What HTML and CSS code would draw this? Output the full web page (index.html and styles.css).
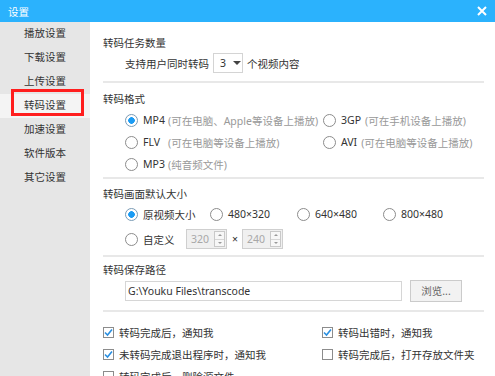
FILE: index.html
```html
<!DOCTYPE html>
<html lang="zh-CN">
<head>
  <meta charset="UTF-8" />
  <meta name="viewport" content="width=device-width, initial-scale=1.0" />
  <title>设置</title>
  <link rel="stylesheet" href="styles.css">
</head>
<body>
  <div class="window">
    <div class="titlebar">
      <span class="title">设置</span>
      <svg class="close" width="10" height="10" viewBox="0 0 10 10">
        <path d="M1 1 L9 9 M9 1 L1 9" stroke="#fff" stroke-width="2" fill="none" />
      </svg>
    </div>

    <div class="content">
      <ul class="sidebar">
        <li>播放设置</li>
        <li>下载设置</li>
        <li>上传设置</li>
        <li class="active">转码设置</li>
        <li>加速设置</li>
        <li>软件版本</li>
        <li>其它设置</li>
      </ul>

      <div class="main">
        <div class="group g-count">
          <div class="group-title">转码任务数量</div>
          <div class="line indent">
            <span>支持用户同时转码</span>
            <span class="select">3<i class="caret"></i></span>
            <span>个视频内容</span>
          </div>
        </div>

        <div class="group g-format">
          <div class="group-title">转码格式</div>
          <div class="format-grid indent">
            <div class="opt"><i class="radio on"></i><span class="fmt">MP4</span><span class="desc">(可在电脑、Apple等设备上播放)</span></div>
            <div class="opt"><i class="radio"></i><span class="fmt-r">3GP</span><span class="desc">(可在手机设备上播放)</span></div>
            <div class="opt"><i class="radio"></i><span class="fmt">FLV</span><span class="desc">(可在电脑等设备上播放)</span></div>
            <div class="opt"><i class="radio"></i><span class="fmt-r">AVI</span><span class="desc">(可在电脑等设备上播放)</span></div>
            <div class="opt"><i class="radio"></i><span class="fmt">MP3</span><span class="desc">(纯音频文件)</span></div>
          </div>
        </div>

        <div class="group g-size">
          <div class="group-title">转码画面默认大小</div>
          <div class="size-grid indent">
            <div class="opt"><i class="radio on"></i>原视频大小</div>
            <div class="opt"><i class="radio"></i>480×320</div>
            <div class="opt"><i class="radio"></i>640×480</div>
            <div class="opt"><i class="radio"></i>800×480</div>
          </div>
          <div class="line custom indent">
            <div class="opt custom-opt"><i class="radio"></i>自定义</div>
            <span class="spin"><span class="spin-val">320</span><span class="spin-btns"><i class="up"></i><i class="down"></i></span></span>
            <span class="times">×</span>
            <span class="spin"><span class="spin-val">240</span><span class="spin-btns"><i class="up"></i><i class="down"></i></span></span>
          </div>
        </div>

        <div class="group g-path">
          <div class="group-title">转码保存路径</div>
          <div class="line path-row indent">
            <span class="path-input">G:\Youku Files\transcode</span>
            <span class="browse">浏览...</span>
          </div>
        </div>

        <div class="group g-notify">
          <div class="check-grid">
            <div class="chk"><i class="box on"><svg width="9" height="9" viewBox="0 0 9 9"><path d="M1 4.5 L3.5 7 L8 1.5" stroke="#2a8fe0" stroke-width="1.6" fill="none" /></svg></i>转码完成后，通知我</div>
            <div class="chk"><i class="box on"><svg width="9" height="9" viewBox="0 0 9 9"><path d="M1 4.5 L3.5 7 L8 1.5" stroke="#2a8fe0" stroke-width="1.6" fill="none" /></svg></i>转码出错时，通知我</div>
            <div class="chk"><i class="box on"><svg width="9" height="9" viewBox="0 0 9 9"><path d="M1 4.5 L3.5 7 L8 1.5" stroke="#2a8fe0" stroke-width="1.6" fill="none" /></svg></i>未转码完成退出程序时，通知我</div>
            <div class="chk"><i class="box"></i>转码完成后，打开存放文件夹</div>
            <div class="chk"><i class="box"></i>转码完成后，删除源文件</div>
          </div>
        </div>
      </div>
    </div>

    <div class="highlight"></div>
  </div>
</body>
</html>
```

FILE: styles.css
```css
* {
  box-sizing: border-box;
}
body {
  margin: 0;
  font-family: "Noto Sans", "Noto Sans CJK SC", sans-serif;
  font-size: 10.5px;
  color: #333;
  background: #fff;
}
.window {
  position: relative;
  width: 495px;
  height: 376px;
  overflow: hidden;
}
.titlebar {
  height: 22px;
  background: #2bb2fd;
  color: #fff;
  display: flex;
  align-items: center;
  justify-content: space-between;
  padding: 0 8px;
}
.content {
  display: flex;
  height: 354px;
}
.sidebar {
  width: 90px;
  margin: 0;
  padding: 0;
  list-style: none;
  background: #e6e6e6;
}
.sidebar li {
  height: 24px;
  line-height: 23px;
  text-align: center;
}
.sidebar li.active {
  background: #f4f4f4;
}
.main {
  flex: 1;
}
.group {
  margin: 0 11px 0 13px;
  border-bottom: 2px solid #e8e8e8;
}
.group-title {
  height: 20px;
  line-height: 20px;
}
.indent {
  margin-left: 22px;
}
.line {
  display: flex;
  align-items: center;
  height: 20px;
  gap: 4px;
}
.g-count {
  padding: 11px 0 8px;
}
.g-format {
  padding: 6px 0 2px;
}
.g-size {
  padding: 5px 0 6px;
}
.g-path {
  padding: 3px 0 9px;
}
.g-notify {
  padding: 9px 0 0;
  border-bottom: none;
}

/* select */
.select {
  width: 30px;
  height: 20px;
  border: 1px solid #d4d4d4;
  display: flex;
  align-items: center;
  padding-left: 6px;
}
.caret {
  width: 0;
  height: 0;
  margin-left: 7px;
  border-left: 4px solid transparent;
  border-right: 4px solid transparent;
  border-top: 4px solid #444;
}

/* radios */
.opt {
  display: flex;
  align-items: center;
  height: 22px;
  white-space: nowrap;
}
.radio {
  width: 13px;
  height: 13px;
  border: 1px solid #8c8c8c;
  border-radius: 50%;
  margin-right: 5px;
  flex: none;
  background: #fff;
}
.radio.on {
  border-color: #7a9bb5;
  background: radial-gradient(circle, #1b9bf3 0 3px, #fff 3.6px);
}
.format-grid {
  display: grid;
  grid-template-columns: 198px auto;
}
.fmt {
  width: 25px;
}
.fmt-r {
  margin-right: 4px;
}
.desc {
  color: #999;
}
.size-grid {
  display: grid;
  grid-template-columns: 85px 87px 86px auto;
}
.size-grid .opt {
  height: 20px;
}
.custom {
  margin-top: 5px;
  gap: 0;
}
.custom-opt {
  width: 61px;
}

/* spin boxes */
.spin {
  width: 41px;
  height: 20px;
  border: 1px solid #cfcfcf;
  background: #f0f0f0;
  color: #a8a8a8;
  display: flex;
  padding: 1px;
}
.spin-val {
  flex: 1;
  line-height: 17px;
  padding-left: 3px;
}
.spin-btns {
  width: 11px;
  display: flex;
  flex-direction: column;
  border: 1px solid #c9c9c9;
  background: #f7f7f7;
}
.spin-btns i {
  flex: 1;
  display: flex;
  align-items: center;
  justify-content: center;
}
.spin-btns i + i {
  border-top: 1px solid #d6d6d6;
}
.spin-btns .up::before,
.spin-btns .down::before {
  content: "";
  border-left: 2px solid transparent;
  border-right: 2px solid transparent;
}
.spin-btns .up::before {
  border-bottom: 2px solid #999;
}
.spin-btns .down::before {
  border-top: 2px solid #999;
}
.times {
  margin: 0 4px 0 5px;
}

/* path */
.path-row {
  margin-top: 1px;
  gap: 0;
}
.path-input {
  width: 277px;
  height: 20px;
  line-height: 18px;
  border: 1px solid #d6d6d6;
  padding-left: 2px;
}
.browse {
  width: 52px;
  height: 22px;
  line-height: 20px;
  margin-left: 8px;
  border: 1px solid #cbcbcb;
  background: #f2f2f2;
  color: #666;
  text-align: center;
}

/* checkboxes */
.check-grid {
  display: grid;
  grid-template-columns: 219px auto;
}
.chk {
  display: flex;
  align-items: center;
  height: 22px;
  white-space: nowrap;
}
.box {
  width: 11px;
  height: 11px;
  border: 1px solid #8c8c8c;
  margin-right: 5px;
  display: flex;
  align-items: center;
  justify-content: center;
  flex: none;
}

/* red annotation box */
.highlight {
  position: absolute;
  left: 11px;
  top: 89px;
  width: 73px;
  height: 27px;
  border: 3px solid #ff1e1e;
}
```
